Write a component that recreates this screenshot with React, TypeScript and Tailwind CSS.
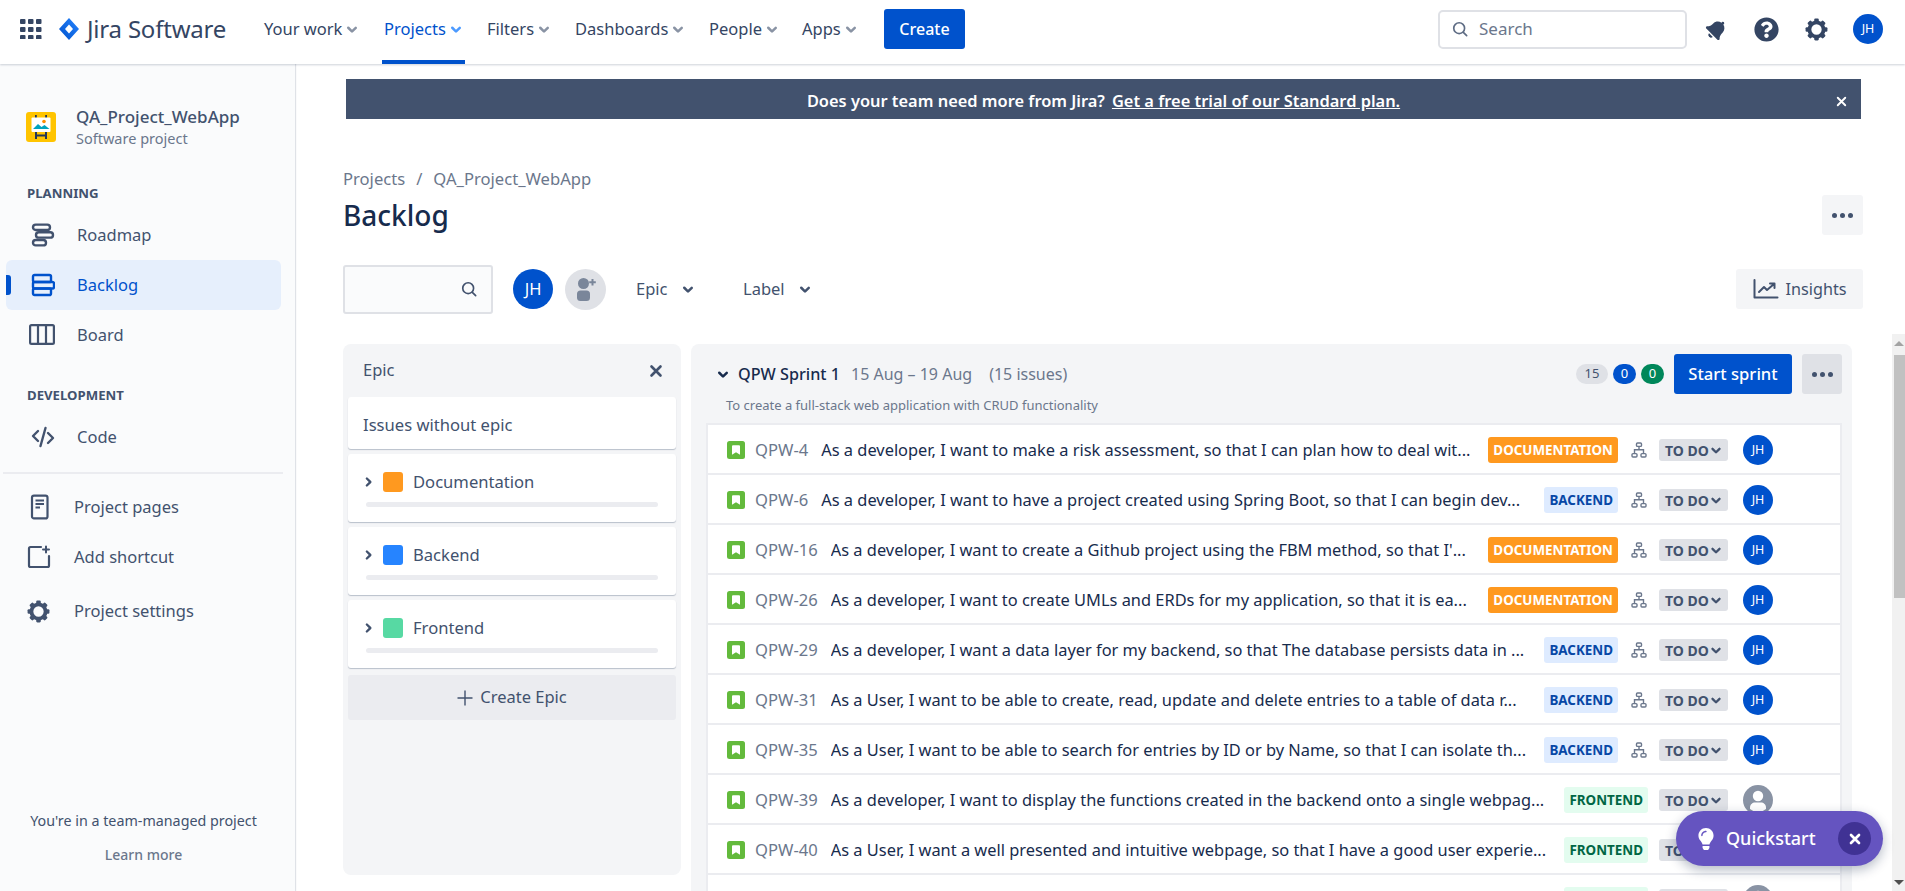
import React from 'react';
import { FaBell, FaQuestionCircle, FaLightbulb } from 'react-icons/fa';

const font = { fontFamily: '"Noto Sans", "Open Sans", sans-serif' };

const Chevron = ({ className }: { className?: string }) => (
  <svg viewBox="0 0 24 24" className={`shrink-0 ${className ?? ''}`} fill="currentColor">
    <path d="M8.292 10.293a1.009 1.009 0 000 1.419l2.939 2.965c.218.215.5.322.779.322s.556-.107.769-.322l2.93-2.955a1.01 1.01 0 000-1.419.987.987 0 00-1.406 0l-2.298 2.317-2.307-2.327a.99.99 0 00-1.406 0z" />
  </svg>
);

const Gear = ({ className }: { className?: string }) => (
  <svg viewBox="0 0 24 24" className={className} fill="currentColor">
    <circle cx="12" cy="12" r="7.4" fill="none" stroke="currentColor" strokeWidth="4" />
    {[0, 45, 90, 135, 180, 225, 270, 315].map((a) => (
      <rect key={a} x="9.6" y="0.6" width="4.8" height="5" rx="1.2" transform={`rotate(${a} 12 12)`} />
    ))}
  </svg>
);

const Search = ({ className }: { className?: string }) => (
  <svg viewBox="0 0 24 24" className={className} fill="none" stroke="currentColor" strokeWidth="2" strokeLinecap="round">
    <circle cx="11" cy="11" r="6.5" />
    <path d="M16 16l4 4" />
  </svg>
);

const Close = ({ className, weight = 3 }: { className?: string; weight?: number }) => (
  <svg viewBox="0 0 24 24" className={className} fill="none" stroke="currentColor" strokeWidth={weight} strokeLinecap="round">
    <path d="M6 6l12 12M18 6L6 18" />
  </svg>
);

const Dots = () => (
  <div className="flex gap-[3px]">
    <span className="w-[5px] h-[5px] rounded-full bg-[#42526e]" />
    <span className="w-[5px] h-[5px] rounded-full bg-[#42526e]" />
    <span className="w-[5px] h-[5px] rounded-full bg-[#42526e]" />
  </div>
);

const Avatar = ({ size = 'w-[30px] h-[30px] text-[12.5px]' }: { size?: string }) => (
  <div className={`${size} rounded-full bg-[#0052cc] text-white flex items-center justify-center shrink-0`}>JH</div>
);

const GreyAvatar = () => (
  <svg viewBox="0 0 30 30" className="w-[30px] h-[30px] shrink-0">
    <circle cx="15" cy="15" r="15" fill="#8993a4" />
    <circle cx="15" cy="11" r="5.2" fill="#fff" />
    <path d="M7 22.5c0-3 2.5-5 5-5h6c2.500 0 5 2 5 5v1.500a12 12 0 01-16 0z" fill="#fff" />
  </svg>
);

const BookmarkIcon = () => (
  <svg viewBox="0 0 18 18" className="w-[18px] h-[18px] shrink-0">
    <rect width="18" height="18" rx="2.5" fill="#63ba3c" />
    <path d="M6 4.200h6a1 1 0 011 1v8.600l-4-2.600-4 2.600V5.200a1 1 0 011-1z" fill="#fff" />
  </svg>
);

const ChildIcon = () => (
  <svg viewBox="0 0 16 16" className="w-4 h-4 text-[#6b778c]" fill="none" stroke="currentColor" strokeWidth="1.4">
    <rect x="5.5" y="1" width="5" height="3.4" rx="1" />
    <rect x="1" y="11.6" width="5" height="3.4" rx="1" />
    <rect x="10" y="11.6" width="5" height="3.4" rx="1" />
    <path d="M8 4.4v3.4M3.5 11.6V7.8h9v3.8" />
  </svg>
);

const navItems = [
  { label: 'Your work', w: 'w-[120px]' },
  { label: 'Projects', active: true, w: 'w-[103px]' },
  { label: 'Filters', w: 'w-[88px]' },
  { label: 'Dashboards', w: 'w-[134px]' },
  { label: 'People', w: 'w-[93px]' },
  { label: 'Apps', w: 'w-[83px]' },
];

const TopBar = () => (
  <header className="h-[64px] shrink-0 bg-white flex items-center pl-[20px] pr-[22px] pb-[6px] shadow-[0_1px_2px_rgba(9,30,66,0.2)] relative z-10">
    <svg viewBox="0 0 22 20" className="w-[22px] h-[20px] text-[#344563]" fill="currentColor">
      {[0, 8, 16].map((y) =>
        [0, 8, 16].map((x) => <rect key={`${x}-${y}`} x={x} y={y} width="5.5" height="5" rx="1" />),
      )}
    </svg>
    <svg viewBox="0 0 22 22" className="w-[22px] h-[22px] ml-[16px]">
      <defs>
        <linearGradient id="jira-logo" x1="0" y1="1" x2="1" y2="0">
          <stop offset="0" stopColor="#0052cc" />
          <stop offset="1" stopColor="#2684ff" />
        </linearGradient>
      </defs>
      <path fillRule="evenodd" fill="url(#jira-logo)" d="M11 0l10 11-10 11L1 11zM11 6.500L7 11l4 4.500 4-4.500z" />
    </svg>
    <span className="ml-[7px] w-[177px] text-[24px] text-[#344563] tracking-[-0.2px]">Jira Software</span>
    <nav className="flex items-center h-full">
      {navItems.map((item) => (
        <div
          key={item.label}
          className={`${item.w} h-full flex items-center relative text-[16.5px] ${item.active ? 'text-[#0052cc]' : 'text-[#344563]'}`}
        >
          <span>{item.label}</span>
          <Chevron className={`w-[30px] h-[30px] ml-[-5px] ${item.active ? 'text-[#4c9aff]' : 'text-[#8993a4]'}`} />
          {item.active && <span className="absolute left-[-2px] bottom-[-6px] w-[83px] h-[4px] bg-[#0052cc]" />}
        </div>
      ))}
    </nav>
    <button className="h-[40px] w-[81px] rounded-[3px] bg-[#0052cc] text-white text-[16px] font-medium ml-[-1px]">Create</button>
    <div className="ml-auto w-[249px] h-[39px] rounded-[5px] border-2 border-[#dfe1e6] flex items-center pl-[10px] gap-[9px] text-[#6b778c]">
      <Search className="w-[20px] h-[20px] text-[#5e6c84]" />
      <span className="text-[17px]">Search</span>
    </div>
    <div className="w-[58px] flex justify-center text-[#344563]">
      <FaBell className="w-[21px] h-[21px] rotate-45" />
    </div>
    <div className="w-[42px] flex justify-center text-[#344563]">
      <FaQuestionCircle className="w-[25px] h-[25px]" />
    </div>
    <div className="w-[58px] flex justify-center text-[#344563]">
      <Gear className="w-[23px] h-[23px]" />
    </div>
    <Avatar size="w-[30px] h-[30px] text-[12.5px] ml-[8px]" />
  </header>
);

const RoadmapIcon = () => (
  <svg viewBox="0 0 24 24" className="w-[24px] h-[26px]" fill="none" stroke="#42526e" strokeWidth="2.4">
    <rect x="2" y="1.6" width="17" height="5.4" rx="2.7" />
    <rect x="5" y="9.2" width="17" height="5.4" rx="2.7" />
    <rect x="2" y="17" width="13" height="5.4" rx="2.7" />
  </svg>
);

const BacklogIcon = () => (
  <svg viewBox="0 0 24 24" className="w-[24px] h-[24px]" fill="none" stroke="#0052cc" strokeWidth="2.4">
    <rect x="2" y="2" width="18" height="7" rx="1.6" />
    <rect x="2" y="9" width="21" height="6.5" rx="1.6" />
    <rect x="2" y="15.5" width="18" height="6.5" rx="1.6" />
  </svg>
);

const BoardIcon = () => (
  <svg viewBox="0 0 26 22" className="w-[26px] h-[22px]" fill="none" stroke="#42526e" strokeWidth="2.2">
    <rect x="1.1" y="1.1" width="23.8" height="18.8" rx="1.4" />
    <path d="M9 1v19M17 1v19" />
  </svg>
);

const CodeIcon = () => (
  <svg viewBox="0 0 24 24" className="w-[24px] h-[24px]" fill="none" stroke="#42526e" strokeWidth="2.4" strokeLinecap="round" strokeLinejoin="round">
    <path d="M7 6l-5 5 5 5M17 8l5 5-5 5M14.500 3L9.500 21" />
  </svg>
);

const PageIcon = () => (
  <svg viewBox="0 0 20 26" className="w-[20px] h-[26px]" fill="none" stroke="#42526e" strokeWidth="2.2">
    <rect x="2" y="1.6" width="15.5" height="22.8" rx="2" />
    <path d="M5.500 6.500h8.500M5.500 10h8.500M5.500 13.500h4.500" strokeWidth="1.8" />
  </svg>
);

const ShortcutIcon = () => (
  <svg viewBox="0 0 24 24" className="w-[24px] h-[24px]" fill="none" stroke="#42526e" strokeWidth="2.2" strokeLinecap="round">
    <path d="M14 2H3.500A1.500 1.500 0 002 3.500v17A1.500 1.500 0 003.500 22h17a1.500 1.500 0 001.500-1.500V11" />
    <path d="M19 1.500v6M16 4.500h6" strokeWidth="2" />
  </svg>
);

const ProjectIcon = () => (
  <svg viewBox="0 0 30 30" className="w-[30px] h-[30px] shrink-0">
    <rect width="30" height="30" rx="3" fill="#ffc400" />
    <rect x="9" y="3" width="1.8" height="3" fill="#253858" />
    <rect x="19.2" y="3" width="1.8" height="3" fill="#253858" />
    <rect x="5.5" y="5.5" width="19" height="14.5" rx="1" fill="#fff" />
    <circle cx="18" cy="9.5" r="1.8" fill="#ff8b00" />
    <path d="M7 17l5-5 3.500 3 3-2 5 4z" fill="#00a3bf" />
    <path d="M10 20v7M20 20v7M10 23.500h10" stroke="#253858" strokeWidth="2" fill="none" />
  </svg>
);

const SideLink = ({ icon, label, active, pad }: { icon: React.ReactNode; label: string; active?: boolean; pad: string }) => (
  <div
    className={`relative h-[50px] ml-[6px] w-[275px] rounded-[6px] flex items-center text-[16.5px] ${
      active ? 'bg-[#e6effc] text-[#0052cc]' : 'text-[#42526e]'
    }`}
  >
    {active && <span className="absolute left-0 top-[15px] w-[5px] h-[20px] bg-[#0052cc] rounded-r-[3px]" />}
    <div className={`${pad} flex items-center shrink-0`}>{icon}</div>
    <span>{label}</span>
  </div>
);

const Sidebar = () => (
  <aside className="w-[295px] shrink-0 bg-[#fafbfc] shadow-[1px_0_1px_rgba(9,30,66,0.13)] flex flex-col text-[#42526e] relative">
    <div className="flex items-center pl-[26px] pt-[42px]">
      <ProjectIcon />
      <div className="ml-[20px]">
        <div className="text-[17px] font-medium leading-[22px]">QA_Project_WebApp</div>
        <div className="text-[14.5px] leading-[20px] text-[#6b778c]">Software project</div>
      </div>
    </div>
    <div className="pl-[27px] mt-[37px] text-[13.2px] font-bold leading-[16px]">PLANNING</div>
    <div className="mt-[9px]">
      <SideLink icon={<RoadmapIcon />} label="Roadmap" pad="w-[71px] pl-[25px]" />
      <SideLink icon={<BacklogIcon />} label="Backlog" active pad="w-[71px] pl-[25px]" />
      <SideLink icon={<BoardIcon />} label="Board" pad="w-[71px] pl-[23px]" />
    </div>
    <div className="pl-[27px] mt-[27px] text-[13.2px] font-bold leading-[16px]">DEVELOPMENT</div>
    <div className="mt-[9px]">
      <SideLink icon={<CodeIcon />} label="Code" pad="w-[71px] pl-[25px]" />
    </div>
    <div className="ml-[3px] w-[280px] h-[2px] bg-[#ebecf0] mt-[10px]" />
    <div className="mt-[8px]">
      <SideLink icon={<PageIcon />} label="Project pages" pad="w-[68px] pl-[24px]" />
      <SideLink icon={<ShortcutIcon />} label="Add shortcut" pad="w-[68px] pl-[21px]" />
      <div className="mt-[4px]">
        <SideLink icon={<Gear className="w-[23px] h-[23px] text-[#42526e]" />} label="Project settings" pad="w-[68px] pl-[21px]" />
      </div>
    </div>
    <div className="mt-auto pb-[26px] w-[287px] text-center">
      <div className="text-[14.3px] leading-[20px]">You're in a team-managed project</div>
      <div className="text-[14px] leading-[20px] mt-[14px] font-medium text-[#6b778c]">Learn more</div>
    </div>
  </aside>
);

const Banner = () => (
  <div className="ml-[3px] w-[1515px] h-[40px] bg-[#42526e] text-white flex items-center justify-center relative text-[16.4px] font-semibold pt-[4px]">
    <span>Does your team need more from Jira?</span>
    <span className="ml-[7px] underline">Get a free trial of our Standard plan.</span>
    <Close className="w-[15px] h-[15px] absolute right-[12px] top-[15px]" />
  </div>
);

const EpicCard = ({ color, label }: { color: string; label: string }) => (
  <div className="bg-white rounded-[3px] shadow-[0_1px_1px_rgba(9,30,66,0.25)] px-[18px] pt-[18px] h-[68px]">
    <div className="flex items-center h-[20px] text-[16.6px] text-[#42526e]">
      <div className="w-[16px] ml-[-6px] flex justify-center">
        <Chevron className="w-[28px] h-[28px] -rotate-90 text-[#42526e]" />
      </div>
      <span className={`w-[20px] h-[20px] rounded-[3px] ml-[7px] ${color}`} />
      <span className="ml-[10px]">{label}</span>
    </div>
    <div className="h-[5px] rounded-full bg-[#ebecf0] mt-[10px]" />
  </div>
);

const EpicPanel = () => (
  <div className="w-[338px] h-[531px] shrink-0 bg-[#f4f5f7] rounded-[8px] px-[5px]">
    <div className="h-[53px] flex items-center justify-between pl-[15px] pr-[11px] text-[16.5px] text-[#42526e]">
      <span>Epic</span>
      <Close className="w-[18px] h-[18px] text-[#42526e]" weight={3.5} />
    </div>
    <div className="flex flex-col gap-[5px]">
      <div className="bg-white rounded-[3px] shadow-[0_1px_1px_rgba(9,30,66,0.25)] h-[52px] flex items-center pl-[15px] pt-[4px] text-[16.6px] text-[#42526e]">
        Issues without epic
      </div>
      <EpicCard color="bg-[#ff991f]" label="Documentation" />
      <EpicCard color="bg-[#2684ff]" label="Backend" />
      <EpicCard color="bg-[#57d9a3]" label="Frontend" />
    </div>
    <div className="mt-[7px] h-[45px] rounded-[3px] bg-[#ebecf0] flex items-center justify-center gap-[7px] text-[16.5px] text-[#42526e]">
      <svg viewBox="0 0 16 16" className="w-[16px] h-[16px]" fill="none" stroke="currentColor" strokeWidth="1.4">
        <path d="M8 0.500v15M0.500 8h15" />
      </svg>
      Create Epic
    </div>
  </div>
);

const lozenges: Record<string, string> = {
  DOCUMENTATION: 'bg-[#ff991f] text-white',
  BACKEND: 'bg-[#deebff] text-[#0747a6]',
  FRONTEND: 'bg-[#e3fcef] text-[#006644]',
};

const issues = [
  { key: 'QPW-4', text: 'As a developer, I want to make a risk assessment, so that I can plan how to deal wit...', tag: 'DOCUMENTATION', child: true },
  { key: 'QPW-6', text: 'As a developer, I want to have a project created using Spring Boot, so that I can begin dev...', tag: 'BACKEND', child: true },
  { key: 'QPW-16', text: "As a developer, I want to create a Github project using the FBM method, so that I'...", tag: 'DOCUMENTATION', child: true },
  { key: 'QPW-26', text: 'As a developer, I want to create UMLs and ERDs for my application, so that it is ea...', tag: 'DOCUMENTATION', child: true },
  { key: 'QPW-29', text: 'As a developer, I want a data layer for my backend, so that The database persists data in ...', tag: 'BACKEND', child: true },
  { key: 'QPW-31', text: 'As a User, I want to be able to create, read, update and delete entries to a table of data r...', tag: 'BACKEND', child: true },
  { key: 'QPW-35', text: 'As a User, I want to be able to search for entries by ID or by Name, so that I can isolate th...', tag: 'BACKEND', child: true },
  { key: 'QPW-39', text: 'As a developer, I want to display the functions created in the backend onto a single webpag...', tag: 'FRONTEND', grey: true },
  { key: 'QPW-40', text: 'As a User, I want a well presented and intuitive webpage, so that I have a good user experie...', tag: 'FRONTEND', grey: true },
  { key: '', text: '', tag: 'FRONTEND', grey: true },
];

const IssueRow = ({ issue }: { issue: (typeof issues)[number] }) => (
  <div className="h-[50px] shrink-0 border-b-2 border-[#ebecf0] flex items-center pl-[19px] pr-[67px] pt-[2px] text-[16.4px]">
    <BookmarkIcon />
    <span className="ml-[10px] text-[#6b778c] shrink-0 text-[16.6px]">{issue.key}</span>
    <span className="ml-[13px] flex-1 min-w-0 truncate text-[#172b4d]">{issue.text}</span>
    <span className={`ml-[10px] h-[26px] px-[5px] rounded-[3px] flex items-center text-[13.4px] font-bold shrink-0 ${lozenges[issue.tag]}`}>
      {issue.tag}
    </span>
    <div className={`flex justify-center shrink-0 ${issue.child ? 'w-[41px]' : 'w-[11px]'}`}>{issue.child && <ChildIcon />}</div>
    <div className="w-[69px] h-[22px] rounded-[3px] bg-[#dfe1e6] flex items-center pl-[6px] text-[14px] font-bold text-[#42526e] shrink-0 overflow-hidden whitespace-nowrap">
      TO DO
      <Chevron className="w-[28px] h-[28px] ml-[-7px]" />
    </div>
    <div className="ml-[15px] shrink-0">{issue.grey ? <GreyAvatar /> : <Avatar />}</div>
  </div>
);

const SprintPanel = () => (
  <div className="flex-1 min-w-0 bg-[#f4f5f7] rounded-t-[8px] pl-[15px] pr-[10px] h-[600px]">
    <div className="h-[79px]">
      <div className="flex items-center pt-[10px] h-[50px] ml-[9px]">
        <div className="w-[16px] flex justify-center">
          <Chevron className="w-[30px] h-[30px] text-[#172b4d]" />
        </div>
        <span className="ml-[7px] text-[16.2px] font-medium text-[#172b4d]">QPW Sprint 1</span>
        <span className="text-[16px] text-[#6b778c] ml-[11px]">15 Aug – 19 Aug</span>
        <span className="text-[16px] text-[#6b778c] ml-[17px]">(15 issues)</span>
        <div className="ml-auto flex items-center">
          <span className="w-[32px] h-[20px] rounded-full bg-[#dfe1e6] text-[#42526e] text-[13px] flex items-center justify-center">15</span>
          <span className="w-[23px] h-[20px] ml-[5px] rounded-full bg-[#0052cc] text-white text-[13px] flex items-center justify-center">0</span>
          <span className="w-[23px] h-[20px] ml-[5px] rounded-full bg-[#00875a] text-white text-[13px] flex items-center justify-center">0</span>
          <button className="ml-[10px] w-[118px] h-[40px] rounded-[3px] bg-[#0052cc] text-white text-[16.6px] font-medium">Start sprint</button>
          <div className="ml-[10px] w-[40px] h-[40px] rounded-[3px] bg-[#dfe1e6] flex items-center justify-center"><Dots /></div>
        </div>
      </div>
      <div className="ml-[20px] text-[13px] leading-[18px] mt-[2px] text-[#6b778c]">To create a full-stack web application with CRUD functionality</div>
    </div>
    <div className="bg-white border-x-2 border-t-2 border-[#ebecf0]">
      {issues.map((issue, i) => (
        <IssueRow key={i} issue={issue} />
      ))}
    </div>
  </div>
);

const Scrollbar = () => (
  <div className="w-[13px] shrink-0 bg-[#f1f1f1] mt-[-10px] flex flex-col items-end ml-[40px]">
    <span className="mt-[7px] mr-[1px] border-x-[5px] border-x-transparent border-b-[5px] border-b-[#a3a3a3]" />
    <div className="mt-[9px] w-[11px] h-[243px] bg-[#c1c1c1]" />
    <span className="mt-auto mb-[6px] mr-[1px] border-x-[5px] border-x-transparent border-t-[5px] border-t-[#505050]" />
  </div>
);

const Main = () => (
  <main className="flex-1 min-w-0 flex flex-col pl-[48px] pt-[15px] overflow-hidden">
    <Banner />
    <div className="mt-[48px] text-[16.6px] text-[#6b778c] leading-[24px]">
      Projects<span className="mx-[11px]">/</span>QA_Project_WebApp
    </div>
    <div className="flex items-start justify-between pr-[42px]">
      <h1 className="text-[28px] font-medium text-[#172b4d] leading-[40px] mt-[4px]">Backlog</h1>
      <div className="mt-[4px] w-[41px] h-[40px] rounded-[3px] bg-[#f4f5f7] flex items-center justify-center"><Dots /></div>
    </div>
    <div className="flex items-center mt-[29px] h-[50px] pr-[42px]">
      <div className="w-[150px] h-[49px] rounded-[3px] border-2 border-[#dfe1e6] bg-[#fafbfc] flex items-center justify-end pr-[12px]">
        <Search className="w-[20px] h-[20px] text-[#42526e]" />
      </div>
      <div className="ml-[20px]"><Avatar size="w-[40px] h-[40px] text-[16.5px]" /></div>
      <svg viewBox="0 0 41 41" className="w-[41px] h-[41px] ml-[12px]">
        <circle cx="20.5" cy="20.5" r="20.5" fill="#dfe1e6" />
        <circle cx="18.5" cy="14.5" r="5.5" fill="#7a869a" />
        <rect x="12" y="21.5" width="13" height="10.5" rx="3.5" fill="#7a869a" />
        <path d="M27.500 10v6.500M24.200 13.200h6.600" stroke="#7a869a" strokeWidth="2" />
      </svg>
      <div className="ml-[30px] w-[107px] flex items-center text-[16.5px] text-[#42526e]">
        Epic
        <Chevron className="w-[30px] h-[30px] ml-[5px]" />
      </div>
      <div className="flex items-center text-[16.5px] text-[#42526e]">
        Label
        <Chevron className="w-[30px] h-[30px] ml-[5px]" />
      </div>
      <div className="ml-auto w-[127px] h-[40px] rounded-[3px] bg-[#f4f5f7] flex items-center justify-center gap-[7px] text-[16.2px] text-[#42526e]">
        <svg viewBox="0 0 26 22" className="w-[26px] h-[22px]" fill="none" stroke="currentColor" strokeWidth="2" strokeLinecap="round" strokeLinejoin="round">
          <path d="M1.500 2v17.500h23" />
          <path d="M6 14l5-5 3 3 7-6M17 5.500h4.500V10" />
        </svg>
        Insights
      </div>
    </div>
    <div className="flex mt-[30px] flex-1 min-h-0">
      <EpicPanel />
      <div className="ml-[10px] flex-1 min-w-0 flex">
        <SprintPanel />
        <Scrollbar />
      </div>
    </div>
  </main>
);

const Quickstart = () => (
  <div className="absolute left-[1676px] top-[811px] w-[207px] h-[55px] rounded-full bg-[#6554c0] shadow-[0_4px_12px_rgba(9,30,66,0.3)] flex items-center pl-[22px] text-white">
    <FaLightbulb className="w-[16px] h-[22px]" />
    <span className="ml-[12px] text-[18px] font-medium">Quickstart</span>
    <span className="absolute right-[12px] top-[11px] w-[33px] h-[33px] rounded-full bg-[#403294] flex items-center justify-center">
      <Close className="w-[16px] h-[16px]" weight={4} />
    </span>
  </div>
);

export default function App() {
  return (
    <div className="relative h-screen w-full overflow-hidden bg-white flex flex-col" style={font}>
      <TopBar />
      <div className="flex flex-1 min-h-0">
        <Sidebar />
        <Main />
      </div>
      <Quickstart />
    </div>
  );
}
